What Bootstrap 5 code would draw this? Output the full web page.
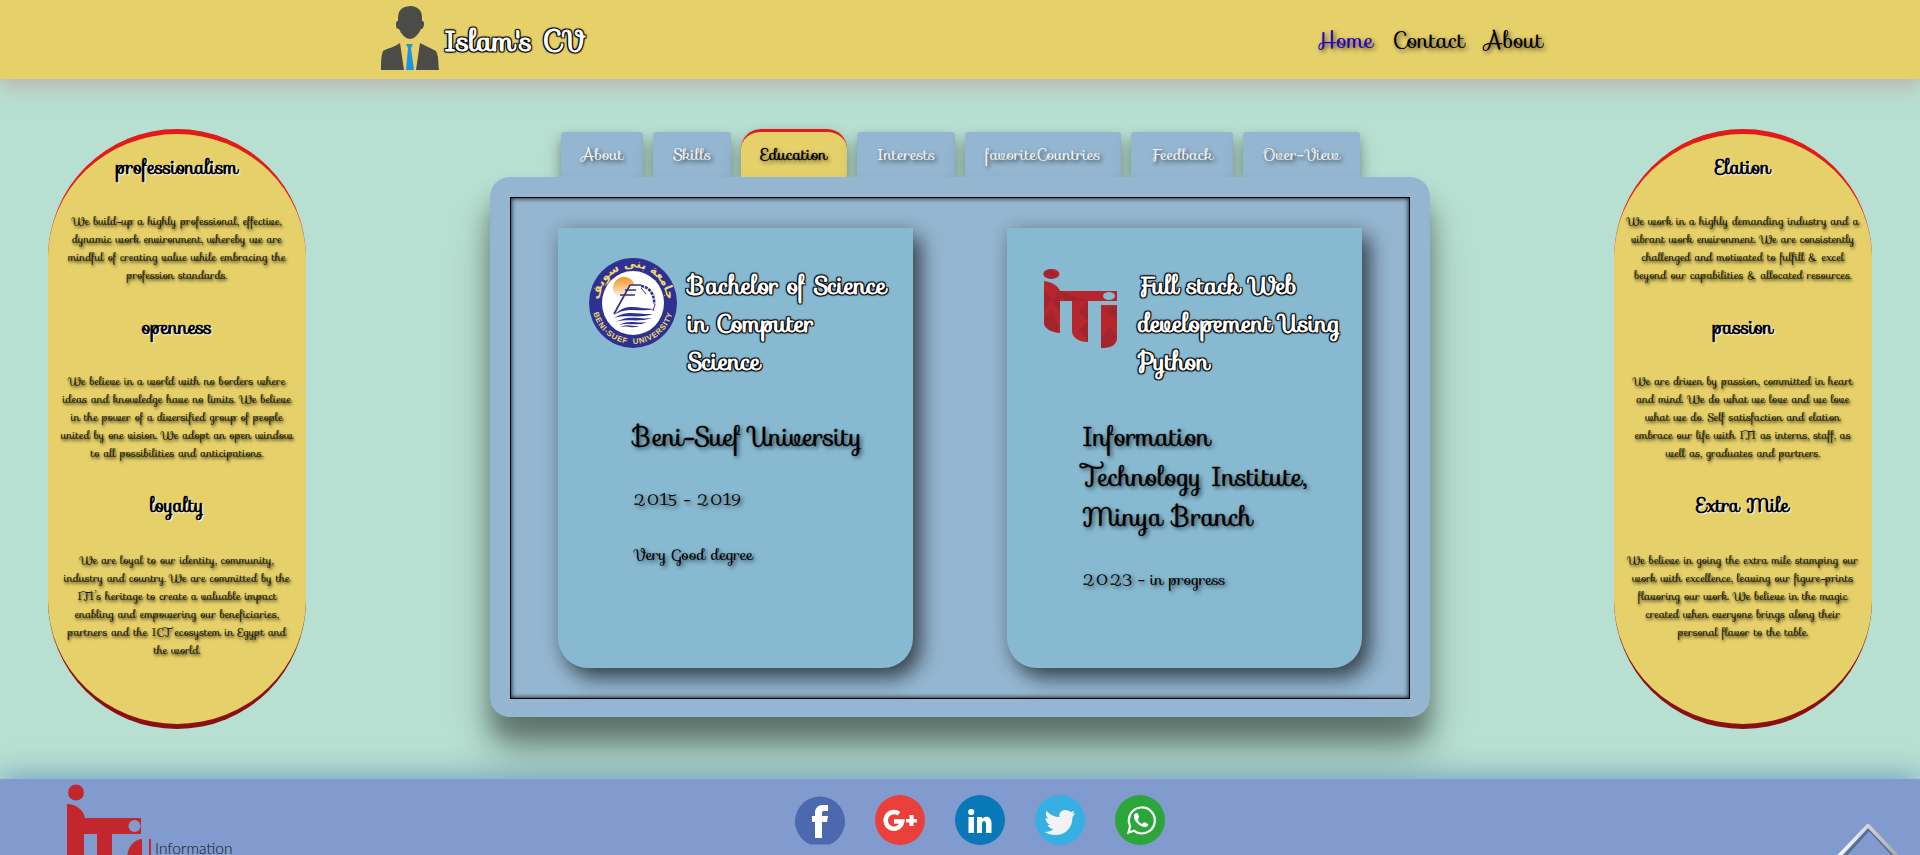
<!DOCTYPE html>
<html lang="en">
<head>
<meta charset="utf-8">
<meta name="viewport" content="width=device-width, initial-scale=1">
<title>Islam's CV</title>
<link href="https://cdn.jsdelivr.net/npm/bootstrap@5.3.0/dist/css/bootstrap.min.css" rel="stylesheet">
<style>
  body { background: #b8e0d2; height: 100vh; overflow: hidden; color: #000; font-family: Sofia, Lato, "Noto Sans", sans-serif; }
  .soft { text-shadow: 2px 2px 4px rgba(0,0,0,.65); }
  .outlined { color: #fff; font-weight: 700; white-space: nowrap; text-shadow: 1px 1px 1px #000, -1px -1px 1px #000, 1px -1px 1px #000, -1px 1px 1px #000; }

  .topbar { height: 79px; background: #e6d06a; box-shadow: 0 5px 22px rgba(190,140,145,.65); padding: 0 377px 0 376px !important; }
  .brand-name { font-size: 28.8px; line-height: 36px; margin-top: 23px; padding-left: 1px; }
  .menu { gap: 19px; font-size: 22.4px; line-height: 36px; margin-top: 23px; }
  .menu a { color: #000; text-decoration: none; }
  .menu a.active { color: #2400c8; }

  .stage { height: 700px; padding: 50px 48px 0; }
  .pill { width: 258px; height: 600px; background: #e6d06a; border-top: 5px solid #e11a1a; border-bottom: 5px solid #8b1010; border-radius: 150px; padding-top: 22px; }
  .pill h5 { font-size: 18.72px; line-height: 24px; font-weight: 700; margin: 32px 0; text-shadow: 1px 1px 1px #fff; }
  .pill h5:first-child { margin-top: 0; }
  .pill p { font-size: 11.2px; line-height: 18px; margin: 0; padding: 0 12px; color: #151500; text-shadow: 1px 2px 3px rgba(0,0,0,.75); }
  .pill h5.last { margin-bottom: 33px; }

  .center-col { width: 940px; }
  .tabs { gap: 10px; height: 48px; padding-left: 71px; }
  .tab { height: 45px; line-height: 45px; padding: 0 20px; font-size: 16px; color: #f2f2f2; background: #94b6d0; border-radius: 3px 3px 0 0; box-shadow: 0 10px 20px rgba(0,0,0,.19), 0 6px 12px rgba(0,0,0,.25); white-space: nowrap; }
  .tab.active { height: 48px; padding: 0 19.5px; background: #e6d06a; color: #000; border-top: 3px solid #e11a1a; border-radius: 20px 20px 0 0; -webkit-text-stroke: .3px #000; }
  .panel { position: relative; height: 540px; background: #94b6d0; border-radius: 20px; padding: 20px 20px 18px; box-shadow: 0 40px 45px rgba(0,0,0,.22), 0 22px 25px rgba(0,0,0,.36); }
  .frame { height: 502px; border: 1px solid #000; box-shadow: inset 0 0 5px #000; padding: 30px 47px; }
  .edu { width: 355px; height: 440px; background: #87bad1; border-radius: 0 0 30px 30px; box-shadow: 8px 10px 20px rgba(0,0,0,.6), 0 0 18px rgba(0,0,0,.12); padding-top: 30px; }
  .edu-head { height: 159px; }
  .edu-body { padding-left: 75px; white-space: nowrap; }
  .edu h4 { font-size: 24px; line-height: 38px; margin: 9px 0 0 1px; }
  .edu h3 { font-size: 25.6px; line-height: 40px; margin: 0; font-weight: 400; -webkit-text-stroke: .3px #000; }
  .edu .fact { font-size: 16px; line-height: 26px; margin: 30px 0 0; }
  .edu .fact + .fact { margin-top: 29px; }

  .foot { position: relative; height: 76px; background: #819bce; box-shadow: 0 -4px 28px rgba(70,120,180,.6); }
  .social { gap: 30px; padding: 16px 0 0 795px; }
  .org { padding: 5px 0 0 66px; }
  .org-name { font: 300 15.5px/19px Lato, sans-serif; color: #10131c; padding: 55px 0 0 4px; }
</style>
</head>
<body>
<header class="topbar navbar d-flex justify-content-between align-items-start position-relative">
  <div class="d-flex">
    <svg width="67" height="79" viewBox="0 0 67 79">
      <path fill="#4b4b48" d="M34 6c7 0 12 4 12 11v4c2 0 2 1 2 4-1 4-2 4-3 4-2 5-7 10-11 10s-9-5-11-10c-2 0-3-1-3-4 0-2 0-4 2-4 0-8 1-12 7-14zM5 70c0-8 0-14 2-19 5-3 12-4 17-8l4 27zm35 0l4-27c5 3 11 5 16 8 3 6 2 12 3 19z"/>
      <path fill="#1c95de" d="M30 44h7l-2 4 3 22h-8l2-22z"/>
    </svg>
    <div class="brand-name outlined">Islam's CV</div>
  </div>
  <nav class="menu d-flex soft">
    <a class="active" href="#">Home</a>
    <a href="#">Contact</a>
    <a href="#">About</a>
  </nav>
</header>

<main class="stage d-flex justify-content-between align-items-start">
  <aside class="pill text-center">
    <h5>professionalism</h5>
    <p>We build-up a highly professional, effective, dynamic work environment, whereby we are mindful of creating value while embracing the profession standards.</p>
    <h5>openness</h5>
    <p>We believe in a world with no borders where ideas and knowledge have no limits. We believe in the power of a diversified group of people united by one vision. We adopt an open window to all possibilities and anticipations.</p>
    <h5 class="last">loyalty</h5>
    <p>We are loyal to our identity, community, industry and country. We are committed by the ITI’s heritage to create a valuable impact enabling and empowering our beneficiaries, partners and the ICT ecosystem in Egypt and the world.</p>
  </aside>

  <section class="center-col">
    <div class="tabs d-flex align-items-end">
      <div class="tab soft">About</div>
      <div class="tab soft">Skills</div>
      <div class="tab soft active">Education</div>
      <div class="tab soft">Interests</div>
      <div class="tab soft">favoriteCountries</div>
      <div class="tab soft">Feedback</div>
      <div class="tab soft">Over-View</div>
    </div>
    <div class="panel">
      <div class="frame d-flex justify-content-between">
        <article class="edu">
          <div class="edu-head d-flex">
            <svg class="ms-4 flex-shrink-0" width="105" height="90" viewBox="-7 0 105 90">
              <defs>
                <linearGradient id="sun" x2="0" y2="1"><stop offset="0" stop-color="#f29325"/><stop offset=".5" stop-color="#f8c888"/><stop offset="1" stop-color="#fff"/></linearGradient>
                <path id="arcTop" d="M10.500 43A33.500 33.500 0 0 1 77.500 43"/>
                <path id="arcBottom" d="M3.200 45A40.800 41 0 0 0 84.800 45"/>
              </defs>
              <ellipse cx="44" cy="45" rx="44" ry="45" fill="#2f3192"/>
              <ellipse cx="44" cy="45" rx="31" ry="32" fill="#fff"/>
              <circle cx="35" cy="30" r="11" fill="url(#sun)"/>
              <path fill="#fff" d="M25 56L41 27h12l12 22-20 12z"/>
              <path fill="none" stroke="#2f3192" stroke-width="1.700" d="M25 56L41 27H52M31 37H46M36 32H47"/>
              <path fill="#2f3192" d="M25 57c13-13 24-6 40-6-15 4-26-3-40 6zm0 3c14-9 24-3 39-4-15 5-26 0-39 4zm2 4c14-8 21-2 36-4-15 5-24 0-36 4zm3 3c11-6 18-1 28-3-10 5-19 0-28 3zm1 2c8-4 13 0 20-1-7 3-13-1-20 1z"/>
              <path fill="none" stroke="#2f3192" stroke-width="2.600" stroke-dasharray="3 1" d="M52 28C61 29 66 38 65 46"/>
              <path fill="none" stroke="#2f3192" stroke-width="1" d="M66 46l-2 7M52 30l5 6"/>
              <g fill="#f0d96c" font-weight="700" text-anchor="middle">
                <text font-family="DejaVu Sans" font-size="12"><textPath href="#arcTop" startOffset="50%">جامعة بنى سويف</textPath></text>
                <text font-family="Liberation Sans" font-size="7.800" letter-spacing=".7" xml:space="preserve"><textPath href="#arcBottom" startOffset="50%">BENI-SUEF  UNIVERSITY</textPath></text>
              </g>
            </svg>
            <h4 class="outlined">Bachelor of Science<br>in Computer<br>Science</h4>
          </div>
          <div class="edu-body soft">
            <h3>Beni-Suef University</h3>
            <p class="fact">2015 - 2019</p>
            <p class="fact">Very Good degree</p>
          </div>
        </article>

        <article class="edu">
          <div class="edu-head d-flex">
            <svg class="flex-shrink-0" width="130" height="90" viewBox="-36 0 130 90">
              <g fill="#b8262d">
                <ellipse cx="8.500" cy="16" rx="8" ry="5"/>
                <path d="M1 23c7 1 14 4 16 10h57v10H45v41c-10 0-16-5-16-11V43H17v32C7 74 1 70 1 65zM58 47h16v34c-1 7-7 9-16 9z"/>
              </g>
              <path fill="#8c2331" opacity=".45" d="M1 32l8 9-8 12zm16 0v24L9 43zM1 60l8-9 8 24c-9-1-16-5-16-10zM17 33l28 10H23zM45 43v20l-10-9zm0 41l-9-12 9-9zM74 47v16L60 51zM58 80l9-12 7 11c-1 7-7 11-16 11zM8 11l7 5-7 5c-10-1-11-9 0-10z"/>
              <ellipse cx="66" cy="38" rx="6" ry="4" fill="#87bad1"/>
            </svg>
            <h4 class="outlined">Full stack Web<br>developement Using<br>Python</h4>
          </div>
          <div class="edu-body soft">
            <h3>Information<br>Technology Institute,<br>Minya Branch</h3>
            <p class="fact">2023 - in progress</p>
          </div>
        </article>
      </div>
    </div>
  </section>

  <aside class="pill text-center">
    <h5>Elation</h5>
    <p>We work in a highly demanding industry and a vibrant work environment. We are consistently challenged and motivated to fulfill &amp; excel beyond our capabilities &amp; allocated resources.</p>
    <h5>passion</h5>
    <p>We are driven by passion, committed in heart and mind. We do what we love and we love what we do. Self satisfaction and elation embrace our life with ITI as interns, staff, as well as, graduates and partners.</p>
    <h5 class="last">Extra Mile</h5>
    <p>We believe in going the extra mile stamping our work with excellence, leaving our figure-prints flavoring our work. We believe in the magic created when everyone brings along their personal flavor to the table.</p>
  </aside>
</main>

<footer class="foot d-flex align-items-start">
  <div class="org d-flex position-absolute">
    <svg width="85" height="75" viewBox="0 0 85 75">
      <g fill="#c1272d">
        <circle cx="10" cy="8.500" r="8"/>
        <path d="M1 20c10 0 17 7 18 14h56v16H46v25H31V50H18v25H1zM76 55v20H61c0-11 6-19 15-20zM83 55h2v20h-2z"/>
      </g>
      <circle cx="68.500" cy="42" r="6" fill="#819bce"/>
    </svg>
    <span class="org-name">Information</span>
  </div>
  <div class="social d-flex">
    <svg width="50" height="50" viewBox="0 0 50 50"><path fill="#4c69b0" d="M15.200 49.500A25 25 0 1 1 34.800 49.500z"/><path fill="#fff" d="M20 43V27h-3v-6h3v-3c0-5 3-8 8-8h5v6h-4c-2 0-2 1-2 3v2h6l-1 6h-5v16z"/></svg>
    <svg width="50" height="50" viewBox="0 0 50 50"><circle cx="25" cy="25" r="25" fill="#e9403b"/><path fill="none" stroke="#fff" stroke-width="4.500" d="M24 18.800a8.300 8.300 0 1 0 3.200 7.700H19"/><path fill="#fff" d="M34.500 20h4v4H42v3.500h-3.500V31h-4v-3.500H31V24h3.500z"/></svg>
    <svg width="50" height="50" viewBox="0 0 50 50"><circle cx="25" cy="25" r="25" fill="#0878b8"/><path fill="#fff" d="M13.500 22h5.500v16h-5.500zM22 22h5v2c3-4 9.500-3 9.500 4v10H31v-9c0-4-4-4-4 0v9h-5z"/><circle cx="16.200" cy="17" r="3.100" fill="#fff"/></svg>
    <svg width="50" height="50" viewBox="0 0 50 50"><circle cx="25" cy="25" r="25" fill="#36b0e3"/><path fill="#f2f2f2" d="M11.500 16c4 4 8 6 13 6-1-4 2-7 6-7 2 0 4 1 5 2l4-1-2 3 3-1-3 4c0 12-8 18-17 18-4 0-8-1-11-3 4 0 7-1 9-3-3 0-5-2-6-4h3c-3-1-5-4-5-7l3 1c-3-3-3-6-2-8z"/></svg>
    <svg width="50" height="50" viewBox="0 0 50 50"><circle cx="25" cy="25" r="25" fill="#2ba63a"/><path fill="none" stroke="#fff" stroke-width="2.200" d="M13.500 37.500l1.600-6.500A13 13 0 1 1 19 35.800z"/><path fill="#fff" d="M19 20c1-2 3-3 4-1l1 3-1 3c1 2 2 3 4 4l2-2 4 2c1 1-1 3-3 3-5 0-12-6-11-12z"/></svg>
  </div>
  <svg class="position-absolute end-0 bottom-0" width="90" height="32" viewBox="0 0 90 32">
    <defs><linearGradient id="edge" x2="1"><stop stop-color="#fff"/><stop offset="1" stop-color="#aaa"/></linearGradient></defs>
    <path fill="none" stroke="#3f4e70" stroke-opacity=".6" stroke-width="3" d="M12 34L39 4 67 34" transform="translate(0 2)"/>
    <path fill="none" stroke="url(#edge)" stroke-width="3.500" stroke-linejoin="round" d="M8 34L38 2.500 68 34"/>
  </svg>
</footer>

<script src="https://cdn.jsdelivr.net/npm/bootstrap@5.3.0/dist/js/bootstrap.bundle.min.js"></script>
</body>
</html>
